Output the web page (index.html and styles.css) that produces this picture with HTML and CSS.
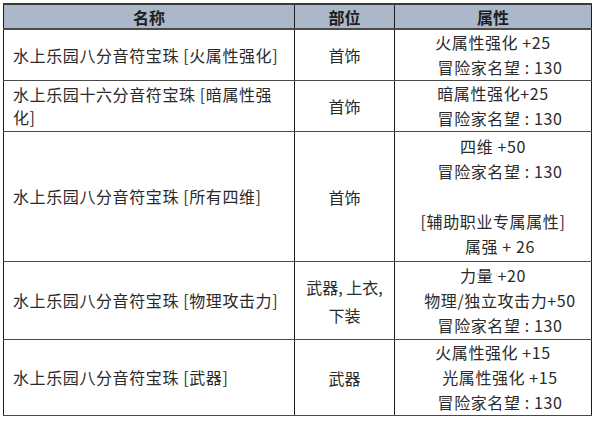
FILE: index.html
```html
<!DOCTYPE html>
<html lang="zh-CN">
<head>
<meta charset="utf-8">
<link rel="stylesheet" href="styles.css">
</head>
<body>
<table class="items">
  <colgroup>
    <col class="c-name">
    <col class="c-slot">
    <col class="c-attr">
  </colgroup>
  <thead>
    <tr class="head">
      <th>名称</th>
      <th>部位</th>
      <th>属性</th>
    </tr>
  </thead>
  <tbody>
    <tr class="r1">
      <td class="name">水上乐园八分音符宝珠 [火属性强化]</td>
      <td class="slot">首饰</td>
      <td class="attr">
        <div class="ln">火属性强化 +25</div>
        <div class="ln sh">冒险家名望 : 130</div>
      </td>
    </tr>
    <tr class="r2">
      <td class="name">水上乐园十六分音符宝珠 [暗属性强化]</td>
      <td class="slot">首饰</td>
      <td class="attr">
        <div class="ln">暗属性强化+25</div>
        <div class="ln sh">冒险家名望 : 130</div>
      </td>
    </tr>
    <tr class="r3">
      <td class="name">水上乐园八分音符宝珠 [所有四维]</td>
      <td class="slot">首饰</td>
      <td class="attr">
        <div class="ln">四维 +50</div>
        <div class="ln sh">冒险家名望 : 130</div>
        <div class="ln">&nbsp;</div>
        <div class="ln">[辅助职业专属属性]</div>
        <div class="ln sh">属强 + 26</div>
      </td>
    </tr>
    <tr class="r4">
      <td class="name">水上乐园八分音符宝珠 [物理攻击力]</td>
      <td class="slot multi">武器, 上衣, 下装</td>
      <td class="attr">
        <div class="ln">力量 +20</div>
        <div class="ln sh">物理/独立攻击力+50</div>
        <div class="ln sh">冒险家名望 : 130</div>
      </td>
    </tr>
    <tr class="r5">
      <td class="name">水上乐园八分音符宝珠 [武器]</td>
      <td class="slot">武器</td>
      <td class="attr">
        <div class="ln">火属性强化 +15</div>
        <div class="ln sh">光属性强化 +15</div>
        <div class="ln sh">冒险家名望 : 130</div>
      </td>
    </tr>
  </tbody>
</table>
</body>
</html>
```
FILE: styles.css
```css
html, body {
  margin: 0;
  padding: 0;
  background: #ffffff;
}

body {
  font-family: "Noto Sans CJK SC", "Microsoft YaHei", sans-serif;
  font-size: 16px;
  color: #2a2a2a;
  letter-spacing: 0.6px;
}

.items {
  margin: 3px 0 0 3px;
  width: 588px;
  border-collapse: collapse;
  table-layout: fixed;
}

.c-name { width: 291px; }
.c-slot { width: 100px; }
.c-attr { width: 197px; }

.items th,
.items td {
  border: 1px solid #1c1c1c;
  border-top-color: #4a4a4a;
  border-bottom-color: #4a4a4a;
  padding: 0;
  vertical-align: middle;
}

.head th {
  background: #abb8ca;
  height: 23px;
  line-height: 22px;
  font-weight: bold;
  font-size: 16px;
  letter-spacing: 0;
  color: #1e1e1e;
  text-align: center;
  border-top: 2px solid #3a3a3a;
  border-bottom: 2px solid #4a4a4a;
}

.name {
  padding: 0 6px 0 9px !important;
  line-height: 23px;
  text-align: left;
}

.slot {
  text-align: center;
  line-height: 28px;
  padding: 0 6px !important;
  letter-spacing: 0;
}

.attr {
  text-align: center;
}

.ln {
  line-height: 25px;
  white-space: nowrap;
}

.sh {
  padding-left: 14px;
}

.r1 td { height: 50px; }
.r2 td { height: 50px; }
.r3 td { height: 129px; }
.r4 td { height: 77px; }
.r5 td { height: 75px; }
```
